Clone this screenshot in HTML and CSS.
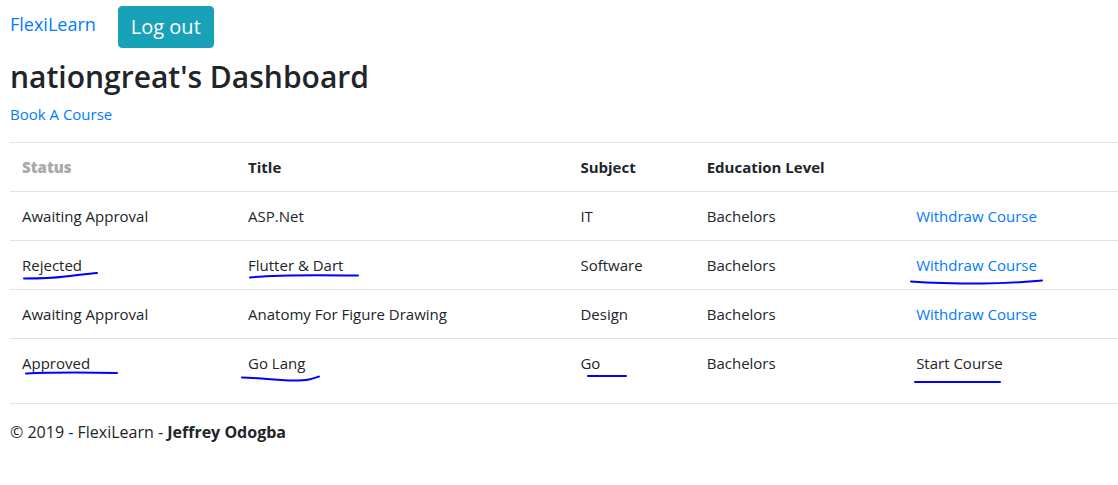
FILE: index.html
```
<!DOCTYPE html>
<html lang="en">
<head>
<meta charset="utf-8">
<meta name="viewport" content="width=device-width, initial-scale=1">
<title>Dashboard - FlexiLearn</title>
<link rel="stylesheet" href="styles.css">
</head>
<body>
<header class="navbar">
  <a class="brand" href="#">FlexiLearn</a>
  <button class="logout" type="button">Log out</button>
</header>
<main>
  <h2 class="heading">nationgreat's Dashboard</h2>
  <p class="book"><a href="#">Book A Course</a></p>
  <table class="courses">
    <colgroup>
      <col class="col-status"><col class="col-title"><col class="col-subject"><col class="col-level"><col>
    </colgroup>
    <thead>
      <tr><th class="status">Status</th><th>Title</th><th>Subject</th><th>Education Level</th><td></td></tr>
    </thead>
    <tbody>
      <tr><td>Awaiting Approval</td><td>ASP.Net</td><td>IT</td><td>Bachelors</td><td><a href="#">Withdraw Course</a></td></tr>
      <tr>
        <td>Rejected<svg class="stroke" viewBox="0 0 150 49" aria-hidden="true"><path d="M14 38.500C30 38.500 44 38 55 36.500S72 34.500 87 33"/></svg></td>
        <td>Flutter &amp; Dart<svg class="stroke" viewBox="0 0 150 49" aria-hidden="true"><path d="M14 37.500C32 35.500 58 34.500 122 35.500"/></svg></td>
        <td>Software</td>
        <td>Bachelors</td>
        <td><a href="#">Withdraw Course</a><svg class="stroke" viewBox="0 0 150 49" aria-hidden="true"><path d="M7 41.500C28 43 50 43.500 78 43.500S120 42 138 40.500"/></svg></td>
      </tr>
      <tr><td>Awaiting Approval</td><td>Anatomy For Figure Drawing</td><td>Design</td><td>Bachelors</td><td><a href="#">Withdraw Course</a></td></tr>
      <tr>
        <td>Approved<svg class="stroke" viewBox="0 0 150 49" aria-hidden="true"><path d="M16 35.500C38 34.500 60 34 107 35"/></svg></td>
        <td>Go Lang<svg class="stroke" viewBox="0 0 150 49" aria-hidden="true"><path d="M6 39.500C26 40 44 42.500 58 42.500S76 41 83 38.500"/></svg></td>
        <td>Go<svg class="stroke" viewBox="0 0 150 49" aria-hidden="true"><path d="M20 38H58"/></svg></td>
        <td>Bachelors</td>
        <td>Start Course<svg class="stroke" viewBox="0 0 150 49" aria-hidden="true"><path d="M11 44H96"/></svg></td>
      </tr>
    </tbody>
  </table>
</main>
<footer class="footer">© 2019 - FlexiLearn - <strong>Jeffrey Odogba</strong></footer>
</body>
</html>
```
FILE: styles.css
```
* { box-sizing: border-box; }

body {
  margin: 0;
  padding: 6px 0 0 10px;
  background: #fff;
  color: #212529;
  font-family: "Segoe UI", "Open Sans", "Noto Sans", sans-serif;
  font-size: 15px;
  line-height: 24px;
}

a { color: #007bff; text-decoration: none; }
a:hover { text-decoration: underline; }

.navbar { display: flex; align-items: flex-start; gap: 22px; }

.brand { padding-top: 4px; font-size: 18px; line-height: 28px; }

.logout {
  padding: 6px 12px;
  border: 1px solid #17a2b8;
  border-radius: 4px;
  background: #17a2b8;
  color: #fff;
  font-family: inherit;
  font-size: 20px;
  line-height: 28px;
}

.heading {
  margin: 10px 0 6px;
  font-size: 30px;
  font-weight: 600;
  line-height: 38px;
}

.book { margin: 0 0 16px; }

.courses {
  width: 100%;
  border-collapse: separate;
  border-spacing: 0;
  table-layout: fixed;
}

.col-status { width: 20.4%; }
.col-title { width: 30%; }
.col-subject { width: 11.4%; }
.col-level { width: 18.9%; }

.courses th,
.courses td {
  position: relative;
  padding: 12px;
  border-top: 1px solid #dee2e6;
  text-align: left;
  vertical-align: top;
}

.courses th { font-weight: 700; }
.courses .status { color: #a9a9a9; font-weight: 800; }

.stroke {
  position: absolute;
  top: -1px;
  left: 0;
  width: 150px;
  height: 49px;
  overflow: visible;
  fill: none;
  stroke: #0000ff;
  stroke-width: 2;
  stroke-linecap: round;
  pointer-events: none;
}

.footer {
  margin-top: 16px;
  padding-top: 16px;
  border-top: 1px solid #e5e5e5;
  font-size: 16px;
}
```
